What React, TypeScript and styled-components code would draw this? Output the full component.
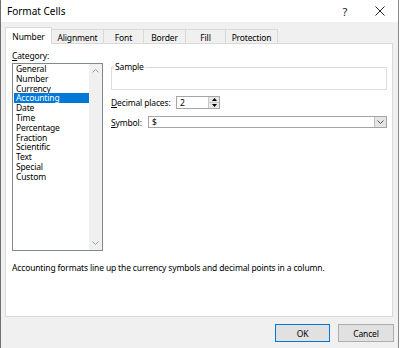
import React from "react";
import styled, { createGlobalStyle } from "styled-components";

const Global = createGlobalStyle`
  html, body { margin: 0; padding: 0; background: #ffffff; }
  body { font-family: "Noto Sans", "Open Sans", sans-serif; }
  * { box-sizing: border-box; }
`;

const Win = styled.div`
  width: 399px;
  height: 348px;
  display: flex;
  flex-direction: column;
  border-left: 1px solid #707070;
  border-right: 1px solid #8a8a8a;
  background: #f0f0f0;
  font-family: "Noto Sans", "Open Sans", sans-serif;
  font-size: 8.5px;
  letter-spacing: -0.15px;
  color: #000;
`;

const TitleBar = styled.div`
  height: 22px;
  flex: none;
  background: #ffffff;
  display: flex;
  align-items: center;
  padding-left: 6px;
  font-size: 10px;
  letter-spacing: 0;
`;

const Title = styled.div`
  flex: 1;
`;

const TitleBtn = styled.div<{ $w: number }>`
  width: ${(p) => p.$w}px;
  height: 22px;
  display: flex;
  align-items: center;
  justify-content: center;
  font-size: 11px;
  color: #222;
`;

const Body = styled.div`
  flex: 1;
  display: flex;
  flex-direction: column;
  padding: 5px 4px 0 4px;
`;

const TabStrip = styled.div`
  display: flex;
  align-items: flex-end;
  height: 17px;
  position: relative;
  z-index: 1;
`;

const Tab = styled.div<{ $active?: boolean; $w: number }>`
  width: ${(p) => p.$w}px;
  height: ${(p) => (p.$active ? 17 : 15)}px;
  display: flex;
  align-items: center;
  justify-content: center;
  background: ${(p) => (p.$active ? "#ffffff" : "#f0f0f0")};
  border: 1px solid #d9d9d9;
  border-bottom: ${(p) => (p.$active ? "none" : "1px solid #d9d9d9")};
  margin-left: -1px;
  &:first-child { margin-left: 0; }
  padding-top: ${(p) => (p.$active ? 0 : 1)}px;
`;

const Panel = styled.div`
  height: 274px;
  margin-top: -1px;
  margin-right: 1px;
  background: #ffffff;
  border: 1px solid #d9d9d9;
  display: flex;
  flex-direction: column;
  padding: 5px 5px 0 6px;
`;

const Content = styled.div`
  display: flex;
  gap: 8px;
`;

const LeftCol = styled.div`
  width: 91px;
  display: flex;
  flex-direction: column;
`;

const Label = styled.div`
  height: 14px;
  line-height: 14px;
  white-space: nowrap;
`;

const Key = styled.span`
  text-decoration: underline;
  text-underline-offset: 1px;
`;

const ListBox = styled.div`
  height: 188px;
  border: 1px solid #828790;
  display: flex;
`;

const Items = styled.div`
  flex: 1;
  padding: 0 0 0 1px;
  display: flex;
  flex-direction: column;
`;

const Item = styled.div<{ $sel?: boolean }>`
  height: 9.8px;
  line-height: 9.8px;
  padding-left: 2px;
  background: ${(p) => (p.$sel ? "#0078d7" : "transparent")};
  color: ${(p) => (p.$sel ? "#ffffff" : "#000000")};
  white-space: nowrap;
`;

const ScrollTrack = styled.div`
  width: 13px;
  background: #f0f0f0;
  display: flex;
  flex-direction: column;
  justify-content: space-between;
  align-items: center;
  padding: 5px 0 5px;
`;

const RightCol = styled.div`
  flex: 1;
  display: flex;
  flex-direction: column;
  padding-top: 13px;
`;

const Group = styled.fieldset`
  margin: 0;
  height: 28px;
  border: 1px solid #dcdcdc;
  padding: 0;
`;

const Legend = styled.legend`
  padding: 0 1px;
  margin-left: 2px;
  line-height: 10px;
`;

const Row = styled.div<{ $mt: number }>`
  display: flex;
  align-items: center;
  margin-top: ${(p) => p.$mt}px;
`;

const RowLabel = styled.div<{ $w: number }>`
  width: ${(p) => p.$w}px;
  white-space: nowrap;
`;

const Spin = styled.div`
  width: 44px;
  height: 13px;
  border: 1px solid #a5a5a5;
  display: flex;
`;

const SpinText = styled.div`
  flex: 1;
  padding-left: 3px;
  line-height: 11px;
`;

const SpinBtns = styled.div`
  width: 11px;
  display: flex;
  flex-direction: column;
  border-left: 1px solid #c8c8c8;
`;

const SpinBtn = styled.div`
  flex: 1;
  background: #e8e8e8;
  display: flex;
  align-items: center;
  justify-content: center;
  & + & { border-top: 1px solid #c8c8c8; }
`;

const Select = styled.div`
  flex: 1;
  height: 12px;
  border: 1px solid #a5a5a5;
  display: flex;
`;

const SelectText = styled.div`
  flex: 1;
  padding-left: 3px;
  line-height: 10px;
`;

const DropBtn = styled.div`
  width: 12px;
  background: #e5e5e5;
  border-left: 1px solid #c0c0c0;
  display: flex;
  align-items: center;
  justify-content: center;
`;

const Desc = styled.div`
  margin-top: 11px;
  line-height: 12px;
  white-space: nowrap;
`;

const Buttons = styled.div`
  display: flex;
  justify-content: flex-end;
  gap: 8px;
  padding: 7px 0 0 0;
`;

const Btn = styled.div<{ $default?: boolean }>`
  width: ${(p) => (p.$default ? 55 : 56)}px;
  height: 18px;
  background: #e1e1e1;
  border: 1px solid ${(p) => (p.$default ? "#0078d7" : "#adadad")};
  display: flex;
  align-items: center;
  justify-content: center;
`;

const Chevron = ({ up, color = "#a0a0a0" }: { up?: boolean; color?: string }) => (
  <svg width="7" height="4" viewBox="0 0 7 4">
    <path
      d={up ? "M0.5 3.5 L3.5 0.5 L6.5 3.5" : "M0.5 0.5 L3.5 3.5 L6.5 0.5"}
      fill="none"
      stroke={color}
      strokeWidth="1"
    />
  </svg>
);

const Tri = ({ up }: { up?: boolean }) => (
  <svg width="5" height="3" viewBox="0 0 5 3">
    <path d={up ? "M0 3 L2.5 0 L5 3 Z" : "M0 0 L2.5 3 L5 0 Z"} fill="#000" />
  </svg>
);

const categories = [
  "General",
  "Number",
  "Currency",
  "Accounting",
  "Date",
  "Time",
  "Percentage",
  "Fraction",
  "Scientific",
  "Text",
  "Special",
  "Custom",
];

const tabs: [string, number][] = [
  ["Number", 47],
  ["Alignment", 53],
  ["Font", 41],
  ["Border", 43],
  ["Fill", 41],
  ["Protection", 53],
];

export default function App() {
  return (
    <>
      <Global />
      <Win>
        <TitleBar>
          <Title>Format Cells</Title>
          <TitleBtn $w={34}>?</TitleBtn>
          <TitleBtn $w={36}>
            <svg width="10" height="10" viewBox="0 0 10 10">
              <path d="M0.5 0.5 L9.5 9.5 M9.5 0.5 L0.5 9.5" stroke="#222" strokeWidth="1" />
            </svg>
          </TitleBtn>
        </TitleBar>
        <Body>
          <TabStrip>
            {tabs.map(([t, w], i) => (
              <Tab key={t} $w={w} $active={i === 0}>
                {t}
              </Tab>
            ))}
          </TabStrip>
          <Panel>
            <Content>
              <LeftCol>
                <Label>
                  <Key>C</Key>ategory:
                </Label>
                <ListBox>
                  <Items>
                    {categories.map((c) => (
                      <Item key={c} $sel={c === "Accounting"}>
                        {c}
                      </Item>
                    ))}
                  </Items>
                  <ScrollTrack>
                    <Chevron up />
                    <Chevron />
                  </ScrollTrack>
                </ListBox>
              </LeftCol>
              <RightCol>
                <Group>
                  <Legend>Sample</Legend>
                </Group>
                <Row $mt={6}>
                  <RowLabel $w={65}>
                    <Key>D</Key>ecimal places:
                  </RowLabel>
                  <Spin>
                    <SpinText>2</SpinText>
                    <SpinBtns>
                      <SpinBtn>
                        <Tri up />
                      </SpinBtn>
                      <SpinBtn>
                        <Tri />
                      </SpinBtn>
                    </SpinBtns>
                  </Spin>
                </Row>
                <Row $mt={7}>
                  <RowLabel $w={37}>
                    <Key>S</Key>ymbol:
                  </RowLabel>
                  <Select>
                    <SelectText>$</SelectText>
                    <DropBtn>
                      <Chevron color="#505050" />
                    </DropBtn>
                  </Select>
                </Row>
              </RightCol>
            </Content>
            <Desc>
              Accounting formats line up the currency symbols and decimal points in a column.
            </Desc>
          </Panel>
          <Buttons>
            <Btn $default>OK</Btn>
            <Btn>Cancel</Btn>
          </Buttons>
        </Body>
      </Win>
    </>
  );
}
